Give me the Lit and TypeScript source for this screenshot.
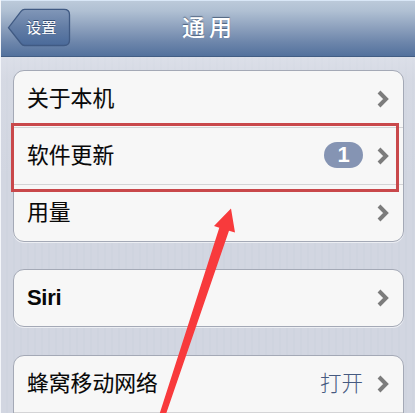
import { LitElement, html, css, nothing } from "lit";
import { customElement, property } from "lit/decorators.js";

const cjk = css`"Liberation Sans", "Noto Sans CJK SC", sans-serif`;

@customElement("settings-row")
class SettingsRow extends LitElement {
  @property() label = "";
  @property() value = "";
  @property() badge = "";

  static styles = css`
    :host {
      display: flex;
      align-items: center;
      box-sizing: border-box;
      height: 57px;
      padding: 0 14px 1px 13px;
      font-family: ${cjk};
      color: #080808;
    }
    .label {
      flex: 1;
      font-size: 21.8px;
      line-height: 30px;
      padding-top: 1px;
      font-weight: 400;
      -webkit-text-stroke: 0.1px #080808;
      white-space: nowrap;
    }
    .latin {
      font-weight: 700;
      font-size: 22px;
      letter-spacing: -0.3px;
      -webkit-text-stroke: 0;
    }
    .value {
      font-size: 21.5px;
      line-height: 30px;
      padding-top: 1px;
      color: #465a80;
      font-weight: 300;
      margin-right: 14px;
    }
    .badge {
      width: 39px;
      height: 26px;
      border-radius: 13px;
      background: #8594b3;
      color: #fff;
      font-weight: 700;
      font-size: 22px;
      line-height: 25px;
      text-align: center;
      margin-right: 14px;
      margin-bottom: 1px;
    }
    .chevron {
      display: block;
      width: 12px;
      height: 18px;
    }
  `;

  render() {
    const latin = /^[A-Za-z]+$/.test(this.label);
    return html`
      <span class=${latin ? "label latin" : "label"}>${this.label}</span>
      ${this.badge ? html`<span class="badge">${this.badge}</span>` : nothing}
      ${this.value ? html`<span class="value">${this.value}</span>` : nothing}
      <svg class="chevron" viewBox="0 0 12 18">
        <path d="M2 2 L9 9 L2 16" fill="none" stroke="#7c7c7c" stroke-width="4" />
      </svg>
    `;
  }
}

@customElement("app-root")
class AppRoot extends LitElement {
  static styles = css`
    :host {
      display: block;
      position: relative;
      box-sizing: border-box;
      width: 415px;
      height: 413px;
      overflow: hidden;
      border-left: 1px solid #f4f6fa;
      font-family: ${cjk};
      background: repeating-linear-gradient(90deg, #d2d6e1 0 5px, #cfd4df 5px 7px);
    }
    .bar {
      display: grid;
      grid-template-columns: 1fr auto 1fr;
      align-items: center;
      box-sizing: border-box;
      height: 57px;
      border-top: 1px solid #d9e7f7;
      border-bottom: 1px solid #425d84;
      background: linear-gradient(#bccada, #b0c0d3 18%, #8b9fbc 50%, #6d86ab 75%, #53719d);
    }
    .back {
      display: grid;
      width: 64px;
      height: 40px;
      margin-left: 6px;
      margin-bottom: 2px;
    }
    .back > * {
      grid-area: 1 / 1;
    }
    .back-text {
      align-self: center;
      padding-left: 19px;
      font-size: 15.3px;
      line-height: 20px;
      color: #fff;
      text-shadow: 0 -1px 0 #354c72;
    }
    .title {
      font-size: 23px;
      line-height: 32px;
      letter-spacing: 4px;
      padding-left: 2px;
      padding-bottom: 1px;
      color: #fff;
      font-weight: 500;
      text-shadow: 0 -1px 1px #4f637f;
    }
    .list {
      display: flex;
      flex-direction: column;
      gap: 27px;
      padding: 13px 11px 0 12px;
      background: linear-gradient(#e4e7ef88, #dfe2ea44 22px, transparent 120px);
    }
    .card {
      border: 1px solid #a4a9b6;
      border-radius: 11px;
      background: #f7f7f7;
      box-shadow: 0 1px 0 #eceef3;
    }
    .card:last-child {
      margin-top: 1px;
    }
    .card > :first-child {
      height: 56px;
    }
    .card > * + * {
      border-top: 1px solid #d4d4d6;
    }
    .cut {
      height: 90px;
    }
    .marks {
      position: absolute;
      left: -1px;
      top: 0;
    }
  `;

  render() {
    return html`
      <header class="bar">
        <div class="back">
          <svg width="64" height="40" viewBox="0 0 64 40">
            <defs>
              <linearGradient id="b" x1="0" y1="0" x2="0" y2="1">
                <stop offset="0" stop-color="#8197b8" />
                <stop offset="0.5" stop-color="#637da5" />
                <stop offset="1" stop-color="#4a6a9a" />
              </linearGradient>
            </defs>
            <path d="M17.5 1.4 H57 Q62.5 1.4 62.5 6.7 V32 Q62.5 37.5 57 37.5 H17.5 Q15.5 37.5 14 35.5 L1.5 19.7 L14 3.4 Q15.5 1.4 17.5 1.4Z"
              fill="url(#b)" stroke="#405a83" stroke-width="1.3" />
          </svg>
          <span class="back-text">设置</span>
        </div>
        <span class="title">通用</span>
      </header>
      <main class="list">
        <section class="card">
          <settings-row label="关于本机"></settings-row>
          <settings-row label="软件更新" badge="1"></settings-row>
          <settings-row label="用量"></settings-row>
        </section>
        <section class="card">
          <settings-row label="Siri"></settings-row>
        </section>
        <section class="card">
          <settings-row label="蜂窝移动网络" value="打开"></settings-row>
          <div class="cut"></div>
        </section>
      </main>
      <svg class="marks" width="415" height="413" viewBox="0 0 415 413">
        <rect x="12.5" y="124.5" width="385" height="66" fill="none" stroke="#c9484b" stroke-width="3" />
        <path d="M231 208.5 L235 232.5 L229 230.8 L166 414 L159.5 414 L219.3 227.8 L214 226 Z" fill="#f83a3c" />
      </svg>
    `;
  }
}
